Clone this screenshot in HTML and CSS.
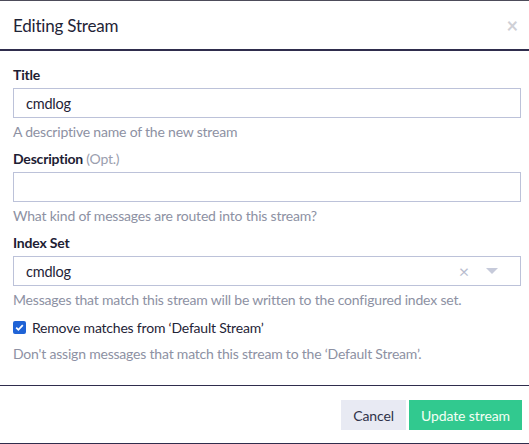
FILE: index.html
```html
<!DOCTYPE html>
<html>
<head>
<meta charset="utf-8">
<link rel="stylesheet" href="styles.css">
</head>
<body>
<div class="modal">
  <div class="modal-header">
    <h4 class="modal-title">Editing Stream</h4>
    <span class="close">&times;</span>
  </div>
  <div class="modal-body">
    <div class="group">
      <label class="label">Title</label>
      <div class="input">cmdlog</div>
      <div class="help">A descriptive name of the new stream</div>
    </div>
    <div class="group">
      <label class="label">Description <span class="opt">(Opt.)</span></label>
      <div class="input"></div>
      <div class="help">What kind of messages are routed into this stream?</div>
    </div>
    <div class="group">
      <label class="label">Index Set</label>
      <div class="input select">
        <span class="value">cmdlog</span>
        <span class="clear">&times;</span>
        <span class="caret"></span>
      </div>
      <div class="help">Messages that match this stream will be written to the configured index set.</div>
    </div>
    <div class="check-row">
      <span class="checkbox"><svg width="11" height="11" viewBox="0 0 11 11"><path d="M2.2 5.6 L4.4 7.8 L8.8 3.2" fill="none" stroke="#fff" stroke-width="1.8"/></svg></span>
      <span class="check-label">Remove matches from ‘Default Stream’</span>
    </div>
    <div class="help last">Don't assign messages that match this stream to the ‘Default Stream’.</div>
  </div>
  <div class="modal-footer">
    <button class="btn btn-default">Cancel</button>
    <button class="btn btn-success">Update stream</button>
  </div>
</div>
</body>
</html>
```
FILE: styles.css
```css
html, body {
  margin: 0;
  padding: 0;
  background: #fff;
}
body {
  font-family: Lato, "Noto Sans", sans-serif;
  font-size: 14px;
  letter-spacing: -0.2px;
  color: #1f2437;
}
.modal {
  width: 529px;
  border-top: 1px solid #4d4c5a;
}
.modal-header {
  height: 48px;
  padding: 0 13px;
  display: flex;
  align-items: center;
  justify-content: space-between;
  border-bottom: 2px solid #2f2d4d;
}
.modal-title {
  margin: 0;
  font-size: 17px;
  font-weight: 400;
  color: #1f2437;
}
.close {
  font-size: 20px;
  font-weight: 700;
  color: #cfd0d6;
  line-height: 1;
  margin-right: -2px;
}
.modal-body {
  padding: 14px 8px 0 13px;
}
.group {
  margin-bottom: 7px;
}
.label {
  display: block;
  font-weight: 700;
  line-height: 20px;
  margin-bottom: 3px;
  color: #1d2033;
}
.opt {
  font-weight: 400;
  color: #9a9eae;
}
.input {
  box-sizing: border-box;
  height: 30px;
  border: 1px solid #bcc2d9;
  padding: 0 12px;
  display: flex;
  align-items: center;
  font-size: 14.5px;
  color: #1f2437;
}
.select .value {
  flex: 1;
}
.clear {
  color: #b9bdcf;
  font-size: 18px;
  margin-right: 17px;
}
.caret {
  width: 0;
  height: 0;
  border-left: 6px solid transparent;
  border-right: 6px solid transparent;
  border-top: 6px solid #c6cada;
  margin-right: 10px;
}
.help {
  margin-top: 4px;
  line-height: 20px;
  color: #8d91a3;
}
.check-row {
  display: flex;
  align-items: center;
  height: 20px;
  margin-top: 7px;
}
.checkbox {
  width: 13px;
  height: 13px;
  background: #1f63d6;
  border-radius: 2px;
  display: flex;
  align-items: center;
  justify-content: center;
  margin-right: 6px;
}
.check-label {
  color: #1f2437;
}
.help.last {
  margin-top: 7px;
  margin-bottom: 0;
}
.modal-footer {
  margin-top: 21px;
  border-top: 1px solid #2f2d4d;
  border-bottom: 2px solid #2f2d4d;
  padding: 14px 7px 13px 0;
  display: flex;
  justify-content: flex-end;
  gap: 3px;
}
.btn {
  font-family: inherit;
  font-size: 14px;
  letter-spacing: -0.1px;
  height: 30px;
  border: none;
  border-radius: 0;
  padding: 0 12px;
  cursor: pointer;
}
.btn-default {
  background: #e8eaf3;
  color: #2f3349;
}
.btn-success {
  background: #31c98f;
  color: #f4fff4;
}
```
